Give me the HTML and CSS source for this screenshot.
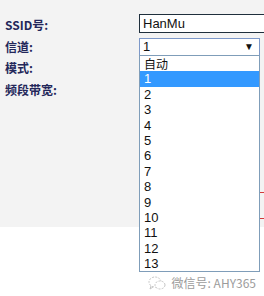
FILE: index.html
```html
<!DOCTYPE html>
<html lang="zh-CN">

<head>
  <meta charset="UTF-8">
  <title>无线设置</title>
  <link rel="stylesheet" href="styles.css">
</head>

<body>
  <main class="panel">
    <div class="form">
      <label class="label">SSID号:</label>
      <div class="field"><input class="text-input" type="text" value="HanMu"></div>

      <label class="label">信道:</label>
      <div class="field">
        <div class="select">
          <span>1</span>
          <span class="arrow">&#9660;</span>
        </div>
      </div>

      <label class="label">模式:</label>
      <div class="field"></div>

      <label class="label">频段带宽:</label>
      <div class="field"></div>
    </div>

    <div class="actions">
      <button class="save-btn">保存</button>
    </div>

    <ul class="dropdown">
      <li>自动</li>
      <li class="selected">1</li>
      <li>2</li>
      <li>3</li>
      <li>4</li>
      <li>5</li>
      <li>6</li>
      <li>7</li>
      <li>8</li>
      <li>9</li>
      <li>10</li>
      <li>11</li>
      <li>12</li>
      <li>13</li>
    </ul>
  </main>

  <footer class="watermark">
    <svg class="wx-icon" width="18" height="14" viewBox="0 0 18 14">
      <ellipse cx="7" cy="6" rx="6" ry="5" fill="none" stroke="#c4c4c4" stroke-width="1" stroke-dasharray="2 1.2"/>
      <ellipse cx="12" cy="9" rx="5" ry="4" fill="#fff" stroke="#c4c4c4" stroke-width="1" stroke-dasharray="2 1.2"/>
      <path d="M3 10 L2 13 L5 11" fill="none" stroke="#c4c4c4" stroke-width="1"/>
    </svg>
    <span>微信号: AHY365</span>
  </footer>
</body>

</html>
```

FILE: styles.css
```css
body {
  margin: 0;
  padding: 0;
  width: 264px;
  height: 296px;
  overflow: hidden;
  background-color: #ffffff;
  font-family: "Noto Sans CJK SC", sans-serif;
}

.panel {
  position: relative;
  height: 227px;
  background-color: #f3f3f3;
  padding-top: 14px;
  box-sizing: border-box;
}

.form {
  display: grid;
  grid-template-columns: 139px 1fr;
  grid-auto-rows: 21.7px;
  align-items: center;
}

.label {
  padding-left: 5px;
  font-size: 12px;
  line-height: 14px;
  color: #23275a;
  font-weight: bold;
}

.field {
  display: flex;
  height: 100%;
  align-items: center;
}

.text-input {
  align-self: flex-start;
  width: 125px;
  height: 19px;
  box-sizing: border-box;
  margin: 0;
  border: 1px solid #1f2f3c;
  border-right: none;
  padding: 0 0 0 3px;
  background: #ffffff;
  font-family: "Liberation Sans", Arial, sans-serif;
  font-size: 13px;
  color: #111111;
  outline: none;
}

.select {
  display: flex;
  justify-content: space-between;
  align-items: center;
  width: 121px;
  height: 18px;
  box-sizing: border-box;
  border: 1px solid #7c98c9;
  background: #ffffff;
  padding: 0 5px 0 3px;
  font-family: "Liberation Sans", Arial, sans-serif;
  font-size: 13px;
  color: #111111;
}

.arrow {
  font-size: 10px;
  color: #111111;
}

.actions {
  display: flex;
  justify-content: flex-end;
  margin-top: 91px;
}

.save-btn {
  width: 50px;
  height: 27px;
  border: 1px solid #d23a3a;
  border-right: none;
  background: transparent;
  color: #d23a3a;
  font-size: 12px;
}

.dropdown {
  position: absolute;
  left: 139px;
  top: 55px;
  width: 121px;
  box-sizing: border-box;
  margin: 0;
  padding: 0;
  list-style: none;
  background: #ffffff;
  border: 1px solid #7f9db9;
  font-family: "Liberation Sans", Arial, sans-serif;
  font-size: 13px;
  color: #111111;
}

.dropdown li {
  height: 15.4px;
  line-height: 15.4px;
  padding-left: 4px;
}

.dropdown li:first-child {
  font-family: "Noto Sans CJK SC", sans-serif;
  font-size: 12px;
}

.dropdown .selected {
  background-color: #3399ff;
  color: #ffffff;
}

.watermark {
  display: flex;
  justify-content: flex-end;
  align-items: center;
  gap: 6px;
  padding: 49px 8px 0 0;
  font-size: 12px;
  line-height: 14px;
  color: #9c9c9c;
}
```
